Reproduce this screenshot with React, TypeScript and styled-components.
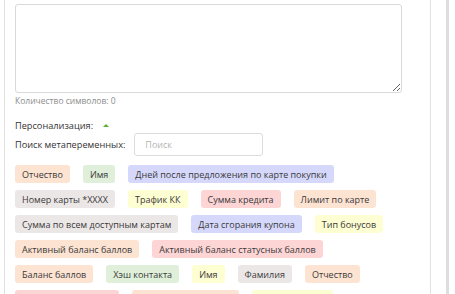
import React from "react";
import styled, { createGlobalStyle } from "styled-components";

const Global = createGlobalStyle`
  html, body { margin: 0; padding: 0; background: #fff; }
  body { font-family: "Open Sans", "Noto Sans", sans-serif; overflow: hidden; }
`;

const Page = styled.div`
  display: flex;
  width: 455px;
  height: 294px;
  overflow: hidden;
  background: #fff;
`;

const Panel = styled.div`
  margin-left: 4px;
  width: 406px;
  height: 294px;
  flex-shrink: 0;
  border-left: 1px solid #e2e2e2;
  border-right: 1px solid #e2e2e2;
  padding: 4px 9px 0 10px;
  box-sizing: content-box;
  display: flex;
  flex-direction: column;
  overflow: hidden;
  & > * { flex-shrink: 0; }
`;

const ScrollBar = styled.div`
  margin-left: 15px;
  width: 3px;
  height: 294px;
  flex-shrink: 0;
  background: #dedede;
`;

const TextArea = styled.textarea`
  display: block;
  width: 387px;
  height: 89px;
  box-sizing: border-box;
  border: 1px solid #d9d9d9;
  border-radius: 3px;
  resize: vertical;
  margin: 0;
  outline: none;
  font-family: inherit;
`;

const Counter = styled.div`
  font-size: 8.5px;
  color: #8c8c8c;
  margin-top: 3px;
  line-height: 10px;
`;

const Label = styled.span`
  font-size: 9.2px;
  color: #333;
  line-height: 13px;
`;

const PersonalRow = styled.div`
  display: flex;
  align-items: center;
  gap: 10px;
  margin-top: 13px;
`;

const Triangle = styled.span`
  width: 0;
  height: 0;
  border-left: 3px solid transparent;
  border-right: 3px solid transparent;
  border-bottom: 3px solid #5bb030;
`;

const SearchRow = styled.div`
  display: flex;
  align-items: center;
  gap: 9px;
  margin-top: 1px;
`;

const SearchInput = styled.input`
  width: 129px;
  height: 23px;
  box-sizing: border-box;
  border: 1px solid #dcdcdc;
  border-radius: 3px;
  padding: 0 10px;
  font-family: inherit;
  font-size: 9px;
  color: #333;
  outline: none;
  &::placeholder { color: #b5b5b5; }
`;

const Tags = styled.div`
  display: flex;
  flex-wrap: wrap;
  column-gap: 13px;
  row-gap: 7px;
  margin-top: 9px;
  width: 387px;
`;

const tagColors = {
  peach: "#fde3d2",
  green: "#dfefd9",
  lavender: "#d6d8fb",
  gray: "#ece7e7",
  yellow: "#fefed3",
  pink: "#fdd5d5",
} as const;

type TagColor = keyof typeof tagColors;

const Tag = styled.span<{ $c: TagColor }>`
  display: inline-flex;
  align-items: center;
  height: 18px;
  padding: 0 7px;
  border-radius: 3px;
  background: ${(p) => tagColors[p.$c]};
  font-size: 9px;
  color: #3a3a3a;
  white-space: nowrap;
`;

const tags: [string, TagColor][] = [
  ["Отчество", "peach"],
  ["Имя", "green"],
  ["Дней после предложения по карте покупки", "lavender"],
  ["Номер карты *XXXX", "gray"],
  ["Трафик КК", "yellow"],
  ["Сумма кредита", "pink"],
  ["Лимит по карте", "peach"],
  ["Сумма по всем доступным картам", "gray"],
  ["Дата сгорания купона", "lavender"],
  ["Тип бонусов", "yellow"],
  ["Активный баланс баллов", "peach"],
  ["Активный баланс статусных баллов", "pink"],
  ["Баланс баллов", "peach"],
  ["Хэш контакта", "green"],
  ["Имя", "yellow"],
  ["Фамилия", "gray"],
  ["Отчество", "peach"],
  ["Количество покупок", "pink"],
  ["Средний чек клиента", "peach"],
  ["Дата рождения", "yellow"],
];

export default function App() {
  return (
    <Page>
      <Global />
      <Panel>
        <TextArea />
        <Counter>Количество символов: 0</Counter>
        <PersonalRow>
          <Label>Персонализация:</Label>
          <Triangle />
        </PersonalRow>
        <SearchRow>
          <Label>Поиск метапеременных:</Label>
          <SearchInput placeholder="Поиск" />
        </SearchRow>
        <Tags>
          {tags.map(([t, c], i) => (
            <Tag key={i} $c={c}>
              {t}
            </Tag>
          ))}
        </Tags>
      </Panel>
      <ScrollBar />
    </Page>
  );
}
